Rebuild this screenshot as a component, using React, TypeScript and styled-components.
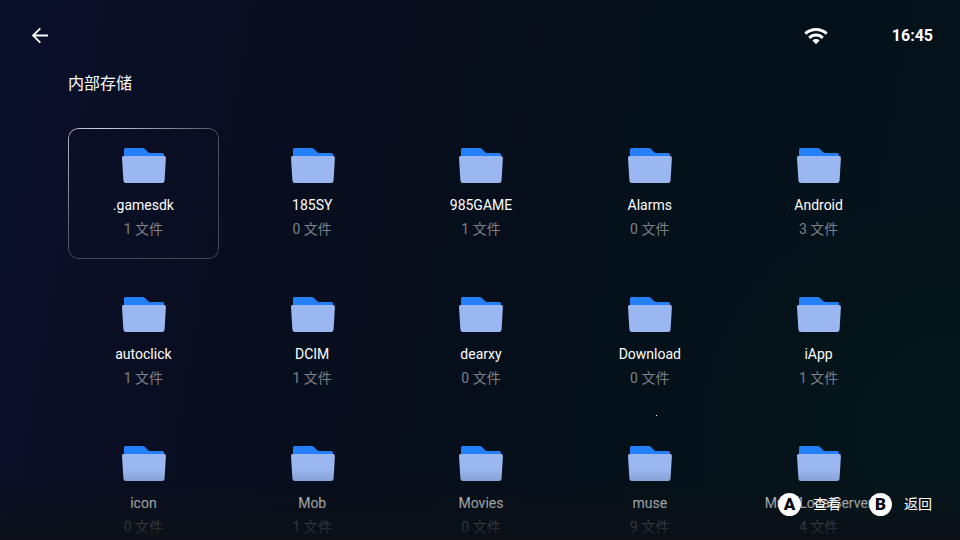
import React from "react";
import styled, { createGlobalStyle } from "styled-components";

const GlobalStyle = createGlobalStyle`
  *, *::before, *::after { box-sizing: border-box; }
  html, body, #root { height: 100%; }
  body {
    margin: 0;
    overflow: hidden;
    background: #050e18;
    color: #ffffff;
    font-family: Roboto, "Noto Sans CJK SC", sans-serif;
  }
  button { font: inherit; color: inherit; border: 0; background: none; padding: 0; }
`;

const Screen = styled.div`
  position: relative;
  display: flex;
  flex-direction: column;
  height: 100vh;
  overflow: hidden;
  background:
    radial-gradient(ellipse 280px 260px at 100% 80%, rgba(4, 26, 26, 0.7), transparent),
    linear-gradient(100deg, #0a112b 0%, #090e22 20%, #060e1b 45%, #04111a 72%, #04121a 100%);
`;

const TopBar = styled.header`
  display: flex;
  align-items: center;
  flex: none;
  height: 72px;
  padding: 0 27px 0 30px;
`;

const BackButton = styled.button`
  display: flex;
  margin-right: auto;
`;

const Clock = styled.time`
  margin-left: 64px;
  font-size: 16px;
  line-height: 20px;
  font-weight: 700;
`;

const Title = styled.h1`
  flex: none;
  margin: 0 68px;
  font-size: 16px;
  line-height: 24px;
  font-weight: 400;
`;

const FolderGrid = styled.main`
  display: grid;
  grid-template-columns: repeat(5, minmax(0, 1fr));
  gap: 18px;
  padding: 32px 66px 0 68px;
`;

const FolderCard = styled.button<{ $focused: boolean }>`
  position: relative;
  display: flex;
  flex-direction: column;
  align-items: center;
  height: 131px;
  padding-top: 19px;
  border-radius: 10px;
  outline: none;

  &::before {
    content: "";
    display: ${(p) => (p.$focused ? "block" : "none")};
    position: absolute;
    inset: 0;
    padding: 1px;
    border-radius: 10px;
    background:
      radial-gradient(circle 130px at 32px 0, rgba(235, 245, 255, 0.8), transparent),
      rgba(255, 255, 255, 0.24);
    mask: linear-gradient(#000 0 0) content-box exclude, linear-gradient(#000 0 0);
  }
`;

const FolderName = styled.span`
  margin-top: 12px;
  font-size: 14px;
  line-height: 20px;
  white-space: nowrap;
`;

const FileCount = styled.span`
  margin-top: 4px;
  font-size: 14px;
  line-height: 20px;
  color: #7b8289;
`;

const BottomFade = styled.div`
  position: absolute;
  inset: auto 0 0;
  height: 72px;
  pointer-events: none;
  background: linear-gradient(
    transparent,
    rgba(12, 17, 22, 0.12) 18%,
    rgba(12, 17, 22, 0.38) 48%,
    rgba(12, 17, 22, 0.68) 80%,
    rgba(12, 16, 21, 0.95)
  );
`;

const KeyHints = styled.footer`
  position: absolute;
  right: 28px;
  bottom: 24px;
  display: flex;
  gap: 28px;
`;

const KeyHint = styled.button`
  display: flex;
  align-items: center;
  gap: 12px;
  font-size: 14px;
  line-height: 24px;
`;

const KeyCap = styled.span`
  width: 23px;
  height: 23px;
  border-radius: 50%;
  background: #ffffff;
  color: #05080c;
  font-size: 17px;
  line-height: 23px;
  font-weight: 900;
  font-family: Roboto, sans-serif;
  text-align: center;
`;

const Speck = styled.i`
  position: absolute;
  left: 68.3%;
  top: 76.8%;
  width: 1px;
  height: 1px;
  background: #ffffff;
`;

const folders = [
  { name: ".gamesdk", count: 1 },
  { name: "185SY", count: 0 },
  { name: "985GAME", count: 1 },
  { name: "Alarms", count: 0 },
  { name: "Android", count: 3 },
  { name: "autoclick", count: 1 },
  { name: "DCIM", count: 1 },
  { name: "dearxy", count: 0 },
  { name: "Download", count: 0 },
  { name: "iApp", count: 1 },
  { name: "icon", count: 0 },
  { name: "Mob", count: 1 },
  { name: "Movies", count: 0 },
  { name: "muse", count: 9 },
  { name: "MuseLocalServer", count: 4 },
];

function BackIcon() {
  return (
    <svg width="20" height="20" viewBox="0 0 20 20" fill="none" stroke="#fff" strokeWidth="1.8" aria-hidden="true">
      <path d="M18 9.5H3.2M10.3 2.3L3.1 9.5l7.2 7.2" />
    </svg>
  );
}

function WifiIcon() {
  return (
    <svg width="24" height="18" viewBox="0 0 24 18" fill="none" stroke="#fff" aria-label="Wi-Fi" role="img">
      <path d="M1.4 6.7C7.2 1.1 16.8 1.1 22.6 6.7" strokeWidth="3.2" />
      <path d="M5.2 10.9C9 7 15 7 18.8 10.9" strokeWidth="3" />
      <path d="M12 17.2L8.4 13.6c1.9-2 5.3-2 7.2 0z" fill="#fff" stroke="none" />
    </svg>
  );
}

function FolderIcon() {
  return (
    <svg width="45" height="36" viewBox="0 0 45 36" aria-hidden="true">
      <path d="M3 2.6Q3 1 4.6 1H21.5Q23 1 24 2l3.2 3.2q.8.8 2 .8H41.5Q43 6 43 7.5V12H3z" fill="#237ffa" />
      <path d="M2.6 9H43.2Q45 9 44.9 11L43.6 33.4Q43.4 36 41 36H5Q2.6 36 2.4 33.4L1 11Q.8 9 2.6 9z" fill="#9ab7f1" />
    </svg>
  );
}

export default function App() {
  return (
    <Screen>
      <GlobalStyle />
      <TopBar>
        <BackButton aria-label="返回">
          <BackIcon />
        </BackButton>
        <WifiIcon />
        <Clock>16:45</Clock>
      </TopBar>
      <Title>内部存储</Title>
      <FolderGrid>
        {folders.map((folder, index) => (
          <FolderCard key={folder.name} $focused={index === 0}>
            <FolderIcon />
            <FolderName>{folder.name}</FolderName>
            <FileCount>{folder.count} 文件</FileCount>
          </FolderCard>
        ))}
      </FolderGrid>
      <Speck />
      <BottomFade />
      <KeyHints>
        <KeyHint>
          <KeyCap>A</KeyCap>
          查看
        </KeyHint>
        <KeyHint>
          <KeyCap>B</KeyCap>
          返回
        </KeyHint>
      </KeyHints>
    </Screen>
  );
}
